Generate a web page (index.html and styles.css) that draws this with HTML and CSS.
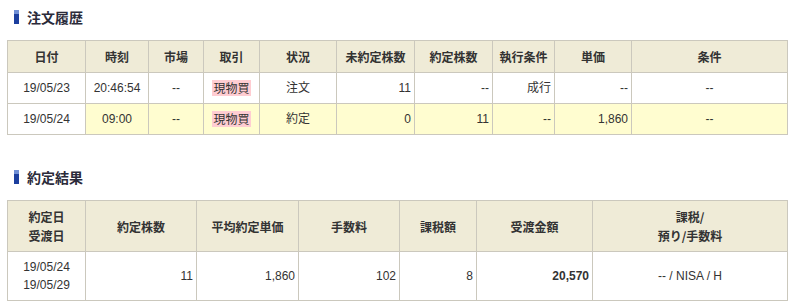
FILE: index.html
```html
<!DOCTYPE html>
<html lang="ja">
<head>
<meta charset="utf-8">
<link rel="stylesheet" href="styles.css">
</head>
<body>
<div class="page">
  <section class="block">
    <h2 class="title"><span class="mark"></span>注文履歴</h2>
    <table class="grid orders">
      <colgroup>
        <col class="w78"><col class="w63"><col class="w55"><col class="w56"><col class="w77">
        <col class="w78"><col class="w78"><col class="w62"><col class="w77"><col class="w156">
      </colgroup>
      <thead>
        <tr><th>日付</th><th>時刻</th><th>市場</th><th>取引</th><th>状況</th><th>未約定株数</th><th>約定株数</th><th>執行条件</th><th>単価</th><th>条件</th></tr>
      </thead>
      <tbody>
        <tr>
          <td class="c">19/05/23</td><td class="c">20:46:54</td><td class="c">--</td><td class="c"><span class="buy">現物買</span></td><td class="c">注文</td>
          <td class="r">11</td><td class="r">--</td><td class="r">成行</td><td class="r">--</td><td class="c">--</td>
        </tr>
        <tr class="done">
          <td class="c plain">19/05/24</td><td class="c">09:00</td><td class="c">--</td><td class="c"><span class="buy">現物買</span></td><td class="c">約定</td>
          <td class="r">0</td><td class="r">11</td><td class="r">--</td><td class="r">1,860</td><td class="c">--</td>
        </tr>
      </tbody>
    </table>
  </section>
  <section class="block second">
    <h2 class="title"><span class="mark"></span>約定結果</h2>
    <table class="grid results">
      <colgroup>
        <col class="w78"><col class="w111"><col class="w102"><col class="w101"><col class="w77"><col class="w116"><col class="w195">
      </colgroup>
      <thead>
        <tr><th>約定日<br>受渡日</th><th>約定株数</th><th>平均約定単価</th><th>手数料</th><th>課税額</th><th>受渡金額</th><th>課税/<br>預り/手数料</th></tr>
      </thead>
      <tbody>
        <tr>
          <td class="c">19/05/24<br>19/05/29</td><td class="r">11</td><td class="r">1,860</td><td class="r">102</td><td class="r">8</td><td class="r strong">20,570</td><td class="c">-- / NISA / H</td>
        </tr>
      </tbody>
    </table>
  </section>
</div>
</body>
</html>
```
FILE: styles.css
```css
* { box-sizing: border-box; }
html, body { margin: 0; padding: 0; background: #fff; }
body {
  font-family: "Liberation Sans", "Noto Sans CJK JP", sans-serif;
  font-size: 12px;
  color: #333;
}
.page { padding: 0 0 0 7px; width: 793px; }
.block { display: flex; flex-direction: column; }
.second { margin-top: 25px; }
.title {
  display: flex;
  align-items: center;
  gap: 8px;
  margin: 0;
  padding: 7px 0 0 7px;
  height: 27px;
  font-family: "Noto Sans CJK JP", sans-serif;
  font-size: 14px;
  font-weight: bold;
  color: #2b2b3a;
  line-height: 20px;
}
.mark {
  width: 5px;
  height: 14px;
  background: linear-gradient(#6f8fd6 0, #6f8fd6 4px, #1c3f9e 4px, #1c3f9e 100%);
}
.grid {
  margin-top: 13px;
  width: 781px;
  border-collapse: collapse;
  table-layout: fixed;
}
.grid th, .grid td { border: 1px solid #cbc8bd; padding: 0 3px; line-height: 16px; }
.grid th {
  background: #efebd7;
  font-family: "Noto Sans CJK JP", sans-serif;
  font-weight: bold;
  font-size: 12px;
  color: #333;
  text-align: center;
  line-height: 19px;
}
.orders th { height: 32px; }
.orders td { height: 31px; }
.results th { height: 51px; }
.results td { height: 49px; line-height: 18px; }
.grid td.c { text-align: center; }
.grid td.r { text-align: right; }
.done td { background: #fffdd0; }
.done td.plain { background: #fff; }
.buy {
  display: inline-block;
  background: #ffcdd2;
  font-family: "Noto Sans CJK JP", sans-serif;
  line-height: 16px;
  padding: 0 1px;
  vertical-align: middle;
}
.strong { font-weight: bold; }
.w55 { width: 55px; } .w56 { width: 56px; } .w62 { width: 62px; } .w63 { width: 63px; }
.w77 { width: 77px; } .w78 { width: 78px; } .w101 { width: 101px; } .w102 { width: 102px; }
.w111 { width: 111px; } .w116 { width: 116px; } .w156 { width: 156px; } .w195 { width: 195px; }
```
